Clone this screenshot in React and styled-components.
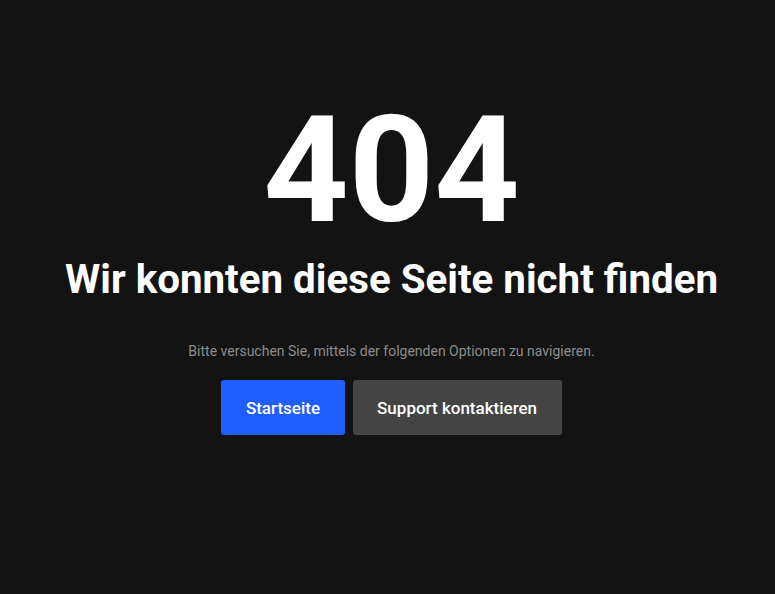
import React from 'react'
import styled, { createGlobalStyle } from 'styled-components'

const GlobalStyle = createGlobalStyle`
  html, body {
    margin: 0;
    padding: 0;
    background: #131313;
  }
  body {
    font-family: Roboto, "Liberation Sans", sans-serif;
  }
`

const Page = styled.main`
  min-height: 594px;
  display: flex;
  flex-direction: column;
  align-items: center;
  padding: 84px 0 0 8px;
  box-sizing: border-box;
  color: #fff;
`

const Code = styled.h1`
  margin: 0;
  font-size: 149px;
  font-weight: 700;
  line-height: 172px;
`

const Title = styled.h2`
  margin: 0;
  font-size: 40.3px;
  font-weight: 700;
  line-height: 48px;
`

const Hint = styled.p`
  margin: 38px 0 0;
  font-size: 14px;
  color: #8c8c8c;
  line-height: 18px;
`

const Actions = styled.div`
  display: flex;
  gap: 8px;
  margin-top: 20px;
`

const Button = styled.a`
  display: flex;
  align-items: center;
  justify-content: center;
  height: 55px;
  padding: 0 24.5px;
  border-radius: 3px;
  background: ${p => p.$primary ? '#1f5eff' : '#444444'};
  color: #fff;
  font-size: 17px;
  font-weight: 500;
  text-decoration: none;
  cursor: pointer;
`

export default function App() {
  return (
    <>
      <GlobalStyle />
      <Page>
        <Code>404</Code>
        <Title>Wir konnten diese Seite nicht finden</Title>
        <Hint>Bitte versuchen Sie, mittels der folgenden Optionen zu navigieren.</Hint>
        <Actions>
          <Button $primary href="#">Startseite</Button>
          <Button href="#">Support kontaktieren</Button>
        </Actions>
      </Page>
    </>
  )
}
